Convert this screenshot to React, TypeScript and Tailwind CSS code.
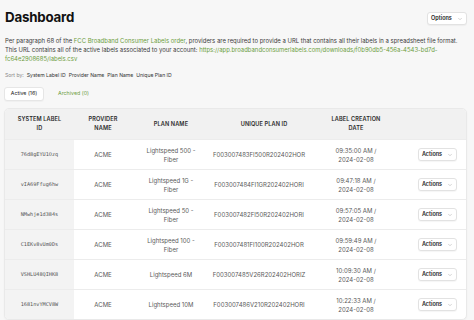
import { ChevronDown } from "lucide-react";

type Row = {
  id: string;
  provider: string;
  plan: string[];
  uniqueId: string;
  time: string;
  date: string;
};

const rows: Row[] = [
  { id: "76d8gEYU1Ozq", provider: "ACME", plan: ["Lightspeed 500 -", "Fiber"], uniqueId: "F003007483FI500R202402HOR", time: "09:35:00 AM /", date: "2024-02-08" },
  { id: "vIA69Ffug6hw", provider: "ACME", plan: ["Lightspeed 1G -", "Fiber"], uniqueId: "F003007484FI1GR202402HORI", time: "09:47:18 AM /", date: "2024-02-08" },
  { id: "NMwhje1d384s", provider: "ACME", plan: ["Lightspeed 50 -", "Fiber"], uniqueId: "F003007482FI50R202402HORI", time: "09:57:05 AM /", date: "2024-02-08" },
  { id: "C1EKv8vUm0Ds", provider: "ACME", plan: ["Lightspeed 100 -", "Fiber"], uniqueId: "F003007481FI100R202402HOR", time: "09:59:49 AM /", date: "2024-02-08" },
  { id: "VSHLU48QIHK8", provider: "ACME", plan: ["Lightspeed 6M"], uniqueId: "F003007485V26R202402HORIZ", time: "10:09:30 AM /", date: "2024-02-08" },
  { id: "1681nvYMCV8W", provider: "ACME", plan: ["Lightspeed 10M"], uniqueId: "F003007486V210R202402HORI", time: "10:22:33 AM /", date: "2024-02-08" },
];

const cols = "grid grid-cols-[69px_58px_74px_106px_88px_1fr]";

function SmallButton({ label, className }: { label: string; className?: string }) {
  return (
    <button
      type="button"
      className={`flex h-[13px] items-center justify-center gap-[5px] rounded-[3px] border border-[#e2e2e2] bg-white text-[5.5px] font-semibold text-[#222] shadow-[0_1px_1px_rgba(0,0,0,0.04)] ${className ?? ""}`}
    >
      {label}
      <ChevronDown className="h-[6px] w-[6px] text-[#aaa]" strokeWidth={2} aria-hidden />
    </button>
  );
}

export default function App() {
  return (
    <div className="min-h-screen bg-[#f7f7f7] px-[4px] font-['Inter',sans-serif] text-[#222]">
      <div className="flex items-start justify-between pl-[1px] pr-[3px]">
        <h1 className="mt-[9px] text-[13.3px] font-bold leading-[17px] tracking-[-0.2px] text-[#111]">
          Dashboard
        </h1>
        <SmallButton label="Options" className="mt-[12px] w-[40px]" />
      </div>

      <p className="mt-[10px] whitespace-nowrap pl-[1px] text-[5.95px] leading-[9px] text-[#3a3a3a]">
        Per paragraph 68 of the{" "}
        <span className="text-[#6c9d3e]">FCC Broadband Consumer Labels order</span>, providers are
        required to provide a URL that contains all their labels in a spreadsheet file format.
        <br />
        This URL contains all of the active labels associated to your account:{" "}
        <span className="text-[#6c9d3e]">
          https://app.broadbandconsumerlabels.com/downloads/f0b90db5-456a-4543-bd7d-
          <br />
          fc64e2908685/labels.csv
        </span>
      </p>

      <div className="mt-[8px] flex gap-[3px] pl-[1px] text-[5.1px] leading-[8px] text-[#888]">
        <span>Sort by:</span>
        <span className="text-[#333]">System Label ID</span>
        <span className="text-[#333]">Provider Name</span>
        <span className="text-[#333]">Plan Name</span>
        <span className="text-[#333]">Unique Plan ID</span>
      </div>

      <div className="mt-[8px] flex items-center gap-[14px] text-[5.3px]">
        <div className="flex h-[14px] w-[40px] items-center justify-center rounded-[3px] border border-[#e6e6e6] bg-white text-[#222] shadow-[0_1px_1px_rgba(0,0,0,0.03)]">
          Active (16)
        </div>
        <div className="text-[#6c9d3e]">Archived (0)</div>
      </div>

      <div className="mt-[7px] mr-[3px] overflow-hidden rounded-[5px] border border-[#e9e9e9] bg-white shadow-[0_1px_2px_rgba(0,0,0,0.04)]">
        <div className={`${cols} h-[30px] items-center bg-[#f1f1f1] text-center text-[5.6px] font-semibold uppercase leading-[9px] tracking-[0.1px] text-[#2a2a2a]`}>
          <div>
            System Label
            <br />
            ID
          </div>
          <div>
            Provider
            <br />
            Name
          </div>
          <div className="pl-[4px]">Plan Name</div>
          <div className="pl-[10px]">Unique Plan ID</div>
          <div>
            Label Creation
            <br />
            Date
          </div>
          <div />
        </div>

        {rows.map((row) => (
          <div
            key={row.id}
            className={`${cols} h-[30px] items-center border-t border-[#ececec] text-center text-[6px] leading-[9px] text-[#5a5a5a]`}
          >
            <div className="flex h-full items-center justify-center bg-[#f3f3f3] font-['DejaVu_Sans_Mono',monospace] text-[5.2px] text-[#555]">
              {row.id}
            </div>
            <div>{row.provider}</div>
            <div className="pl-[4px]">
              {row.plan.map((line) => (
                <div key={line}>{line}</div>
              ))}
            </div>
            <div className="whitespace-nowrap">{row.uniqueId}</div>
            <div>
              <div>{row.time}</div>
              <div>{row.date}</div>
            </div>
            <div className="flex justify-end pr-[9px]">
              <SmallButton label="Actions" className="w-[39px]" />
            </div>
          </div>
        ))}
      </div>
    </div>
  );
}
